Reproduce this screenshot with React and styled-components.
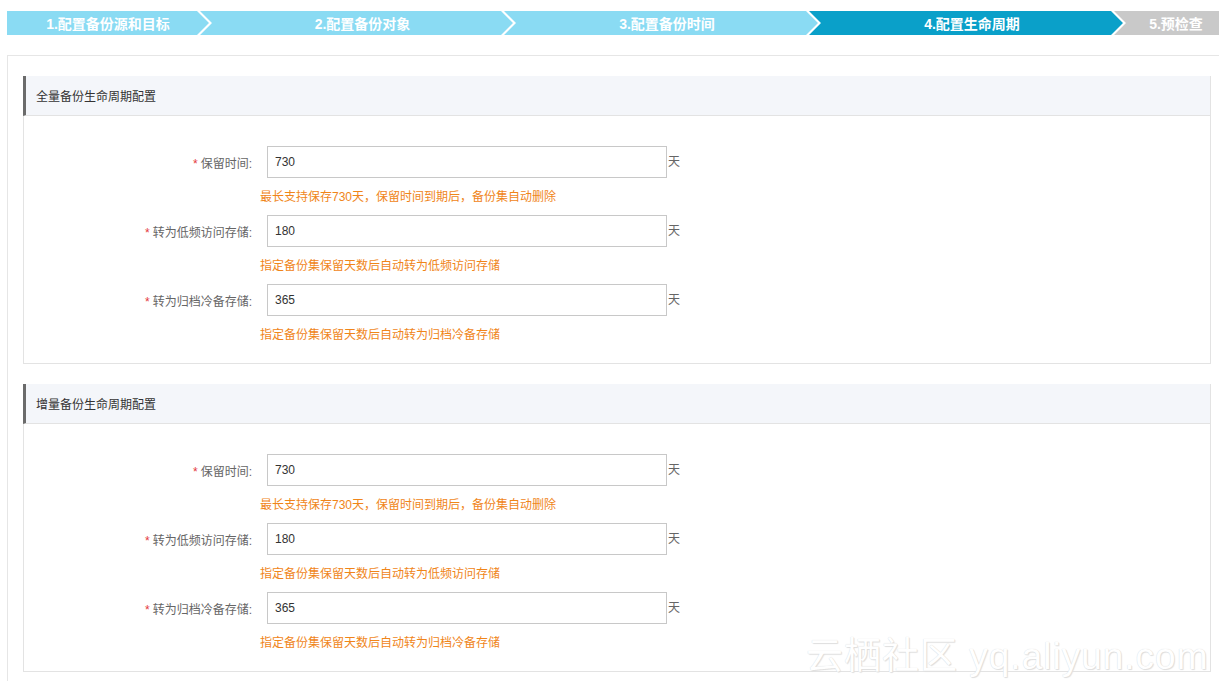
import React from "react";
import styled, { createGlobalStyle } from "styled-components";

const Global = createGlobalStyle`
  html, body { margin: 0; padding: 0; background: #fff; overflow: hidden; }
  body { font-family: "Liberation Sans", "Noto Sans CJK SC", sans-serif; font-size: 12px; color: #333; }
`;

const Page = styled.div`
  position: relative;
  width: 1219px;
  height: 681px;
  overflow: hidden;
  padding: 11px 0 0 7px;
  box-sizing: border-box;
`;

const StepBar = styled.div`
  display: flex;
  height: 24px;
  width: 1300px;
`;

const Step = styled.div`
  flex: none;
  width: ${(p) => p.w}px;
  margin-left: ${(p) => (p.first ? 0 : -9)}px;
  padding-left: ${(p) => (p.first ? 0 : 12)}px;
  box-sizing: border-box;
  background: ${(p) => (p.state === "active" ? "#0aa0c9" : p.state === "todo" ? "#c9c9c9" : "#8adbf3")};
  clip-path: ${(p) =>
    p.first
      ? "polygon(0 0, calc(100% - 12px) 0, 100% 50%, calc(100% - 12px) 100%, 0 100%)"
      : "polygon(0 0, calc(100% - 12px) 0, 100% 50%, calc(100% - 12px) 100%, 0 100%, 12px 50%)"};
  display: flex;
  align-items: center;
  justify-content: center;
  color: #fff;
  font-weight: bold;
  font-size: 14px;
  white-space: nowrap;
`;

const StepText = styled.span`
  position: relative;
  left: ${(p) => p.shift || 0}px;
`;

const Container = styled.div`
  margin-top: 20px;
  width: 1220px;
  border: 1px solid #e6e6e6;
  padding: 20px 16px 20px 15px;
  box-sizing: border-box;
  display: flex;
  flex-direction: column;
  gap: 20px;
`;

const Panel = styled.section`
  border: 1px solid #e3e3e3;
  width: 1188px;
  box-sizing: border-box;
`;

const PanelHeader = styled.div`
  height: 39px;
  background: #f4f6fa;
  border-bottom: 1px solid #e3e3e3;
  border-left: 3px solid #6b6b6b;
  margin: -1px 0 0 -1px;
  display: flex;
  align-items: center;
  padding-left: 10px;
  font-size: 12px;
  color: #333;
`;

const PanelBody = styled.div`
  padding: 30px 0 10px 0;
`;

const FormItem = styled.div`
  display: flex;
  flex-direction: column;
`;

const Line = styled.div`
  display: flex;
  align-items: center;
`;

const Label = styled.label`
  width: 243px;
  text-align: right;
  padding-right: 15px;
  box-sizing: border-box;
  color: #666;
  font-size: 12px;
  white-space: nowrap;
`;

const Star = styled.span`
  color: #e4393c;
  margin-right: 3px;
`;

const Input = styled.input`
  width: 400px;
  height: 32px;
  box-sizing: border-box;
  border: 1px solid #c8c8c8;
  padding: 0 7px;
  font-family: "Liberation Sans", "Noto Sans CJK SC", sans-serif;
  font-size: 12px;
  color: #333;
  outline: none;
`;

const Unit = styled.span`
  color: #666;
  font-size: 12px;
  margin-left: 1px;
  align-self: flex-start;
  margin-top: 6px;
`;

const Help = styled.div`
  margin: 10px 0 9px 236px;
  line-height: 18px;
  color: #f08519;
  font-size: 12px;
`;

const Watermark = styled.div`
  position: absolute;
  left: 806px;
  top: 626px;
  font-family: "Liberation Sans", "Noto Sans CJK SC", sans-serif;
  font-size: 37px;
  letter-spacing: 1px;
  color: #fff;
  text-shadow: 0 0 1px #d0d0d0, 1px 1px 1px #e0e0e0;
  white-space: nowrap;
  pointer-events: none;
`;

const steps = [
  { t: "1.配置备份源和目标", w: 202, s: "done" },
  { t: "2.配置备份对象", w: 313, s: "done" },
  { t: "3.配置备份时间", w: 314, s: "done" },
  { t: "4.配置生命周期", w: 314, s: "active" },
  { t: "5.预检查", w: 150, s: "todo", shift: -19 },
];

const rows = [
  { label: "保留时间:", value: "730", help: "最长支持保存730天，保留时间到期后，备份集自动删除" },
  { label: "转为低频访问存储:", value: "180", help: "指定备份集保留天数后自动转为低频访问存储" },
  { label: "转为归档冷备存储:", value: "365", help: "指定备份集保留天数后自动转为归档冷备存储" },
];

function LifecyclePanel({ title }) {
  return (
    <Panel>
      <PanelHeader>{title}</PanelHeader>
      <PanelBody>
        {rows.map((r) => (
          <FormItem key={r.label}>
            <Line>
              <Label>
                <Star>*</Star>
                {r.label}
              </Label>
              <Input defaultValue={r.value} />
              <Unit>天</Unit>
            </Line>
            <Help>{r.help}</Help>
          </FormItem>
        ))}
      </PanelBody>
    </Panel>
  );
}

export default function App() {
  return (
    <Page>
      <Global />
      <StepBar>
        {steps.map((s, i) => (
          <Step key={s.t} w={s.w} first={i === 0} state={s.s}>
            <StepText shift={s.shift}>{s.t}</StepText>
          </Step>
        ))}
      </StepBar>
      <Container>
        <LifecyclePanel title="全量备份生命周期配置" />
        <LifecyclePanel title="增量备份生命周期配置" />
      </Container>
      <Watermark>云栖社区 yq.aliyun.com</Watermark>
    </Page>
  );
}
